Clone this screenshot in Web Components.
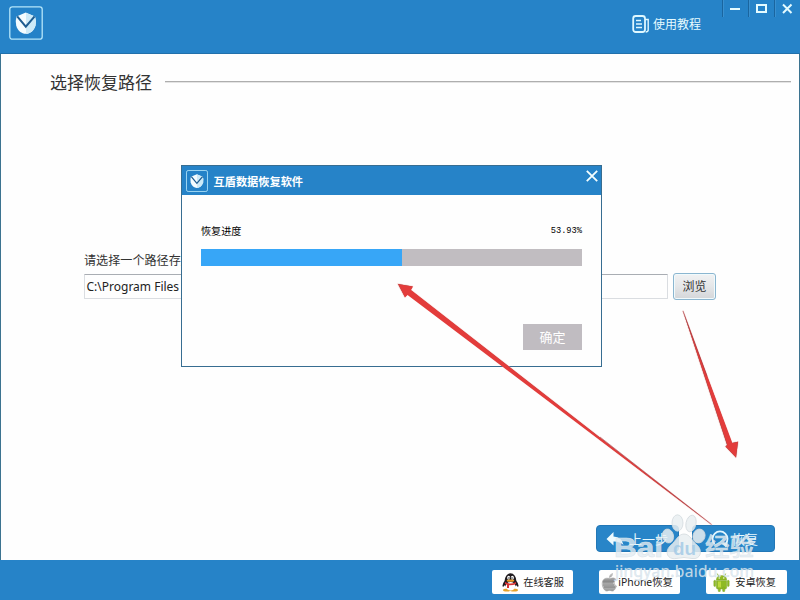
<!DOCTYPE html>
<html lang="zh-CN">
<head>
<meta charset="utf-8">
<title>互盾数据恢复软件</title>
<style>
html,body{margin:0;padding:0}
body{width:800px;height:600px;overflow:hidden;background:#fff;font-family:"Noto Sans","Noto Sans CJK SC",sans-serif}
</style>
</head>
<body>
<recovery-window></recovery-window>
<script>
const define = (name, html) => customElements.define(name, class extends HTMLElement {
  constructor() {
    super();
    const t = document.createElement('template');
    t.innerHTML = html;
    this.attachShadow({ mode: 'open' }).appendChild(t.content.cloneNode(true));
  }
});

define('shield-logo', `
<style>:host{display:block;flex:none;width:34px;height:34px}svg{display:block;width:100%;height:100%}</style>
<svg viewBox="0 0 34 34"><rect x=".8" y=".8" width="32.4" height="32.4" rx="2.5" fill="#2482c8" stroke="#b5e6fa" stroke-width="1.3"/>
<path d="M7.5 10.5L16.8 6.5 26 10.5Q27.5 14 26.5 19.5C25 25 21 27.8 16.8 27.8S8.6 25 7.2 19.5Q6.3 14 7.5 10.5Z" fill="#f4fcff"/>
<path d="M17 7L26 10.5Q27.5 14 26.5 19.5C25 25 21 27.8 17 27.8Z" fill="#cdeaf8"/>
<path d="M8.2 10.3L16.8 20.6 25.6 10.3" fill="none" stroke="#1d5c91" stroke-width="2"/></svg>`);

define('window-controls', `
<style>:host{display:flex;height:17px}span{width:25px;height:17px;border-left:1px solid #1a659f;box-shadow:inset 1px 0 #3990d0}svg{display:block;width:25px;height:17px;fill:none;stroke:#e4fbff;stroke-width:2}</style>
<span><svg viewBox="0 0 25 17"><path d="M7 9h10"/></svg></span>
<span><svg viewBox="0 0 25 17"><path d="M8 5h9v7H8z"/></svg></span>
<span><svg viewBox="0 0 25 17"><path d="M8 4.5l8.5 8.5m0-8.5l-8.5 8.5"/></svg></span>`);

define('app-header', `
<style>
:host{display:flex;box-sizing:border-box;height:54px;background:#2683c8;border-bottom:1px solid #2170ab;padding:6px 0 0 9px}
.help{margin:8px 0 0 auto;display:flex;height:20px;align-items:center;gap:3px;color:#e7fbff;font-size:12px;line-height:20px}
.help svg{width:18px;height:20px;fill:none;stroke:#dff8ff;stroke-width:1.4}
.help span{padding-top:1px}
window-controls{margin:-6px 0 0 21px}
</style>
<shield-logo></shield-logo>
<div class="help"><svg viewBox="0 0 18 20"><rect x="1.2" y="2" width="11.8" height="16" rx="2.5" stroke-width="1.8"/><path d="M13 5.5h3.2v10.7q-.2 1.8-2.5 1.8M4 6.5h5M4 10h6M4 13.5h6"/></svg><span>使用教程</span></div>
<window-controls></window-controls>`);

define('section-title', `
<style>:host{display:flex;align-items:center;height:26px;gap:13px;font-size:17px;line-height:26px;color:#333}
span{padding-top:1px}
i{flex:1;height:1px;background:#aeaeae;border-bottom:1px solid #e4e4e4}</style><span><slot></slot></span><i></i>`);

define('path-picker', `
<style>
:host{display:block;width:632px}
p{margin:0;font-size:12.1px;line-height:18px;color:#333}
div{display:flex;gap:5px;margin-top:3px}
.field{box-sizing:border-box;width:585px;height:25px;margin-top:1px;border:1px solid #dadde1;border-top-color:#a9adb3;border-radius:1px;padding-left:1.5px;font-size:12px;line-height:23px;color:#222}
.browse{box-sizing:border-box;width:43px;height:27px;border:1px solid #8bb6d0;border-radius:3px;background:linear-gradient(#f1f2f3,#e5e7e9 48%,#d4d6d9);box-shadow:inset 0 0 0 1px #f1fafc;text-align:center;font-size:12px;line-height:25px;color:#333}
</style>
<p>请选择一个路径存放</p>
<div><span class="field">C:\\Program Files</span><span class="browse">浏览</span></div>`);

define('progress-dialog', `
<style>
:host{display:block;box-sizing:border-box;width:421px;height:202px;background:#fefefe;border:1px solid #376d91}
header{display:flex;height:29px;background:#2683c8;color:#fff;align-items:center;padding:0 3px 0 4px;font-size:11.2px;font-weight:700}
header shield-logo{width:22px;height:22px;margin-right:5.5px}
header svg{margin:-9px 0 0 auto;width:12px;height:12px;stroke:#f5ffff;stroke-width:1.8}
main{padding:26px 19px 0}
.row{display:flex;justify-content:space-between;font-size:10.1px;line-height:20px;height:20px;color:#000}
.row b{font:400 8.7px/21px "Liberation Mono",monospace}
.bar{height:17px;margin-top:7.5px;background:#c1bdc1}.bar i{display:block;width:201px;height:17px;background:#37a6f7}
.ok{width:59px;height:26px;margin:58.5px 0 0 auto;background:#c0bcc1;color:#fff;text-align:center;font-size:13px;line-height:26px}
</style>
<header><shield-logo></shield-logo><span>互盾数据恢复软件</span><svg viewBox="0 0 12 12"><path d="M.8.8l10.4 10.4m0-10.4L.8 11.2"/></svg></header>
<main><div class="row"><span>恢复进度</span><b>53.93%</b></div><div class="bar"><i></i></div><div class="ok">确定</div></main>`);

define('action-button', `
<style>:host{display:flex;box-sizing:border-box;width:83px;height:27px;border-radius:4px;background:#2885c8;border:1px solid #2277b6;color:#e8faff;align-items:center;justify-content:flex-end;font-size:13px;line-height:24px;padding-right:10px;gap:4px}
::slotted(svg){width:20px;height:20px;flex:none}</style><slot name="icon"></slot><slot></slot>`);

define('link-button', `
<style>:host{display:flex;box-sizing:border-box;width:81px;height:24px;background:#fff;border-radius:2px;align-items:center;justify-content:flex-end;padding-right:9px;gap:4px;font-size:10.2px;line-height:24px;color:#222;white-space:nowrap}
::slotted(svg){width:17px;height:19px;flex:none}</style><slot name="icon"></slot><slot></slot>`);

define('app-footer', `
<style>:host{display:flex;box-sizing:border-box;height:40px;background:#2683c8;padding:10px 13px 0;justify-content:flex-end;gap:26px}
.iphone{padding-right:7px;gap:0;font-size:10.4px}.last{padding-right:11px;gap:5px}</style>
<link-button><svg slot="icon" viewBox="0 0 17 19"><ellipse cx="5" cy="17" rx="4" ry="1.6" fill="#e8a32a"/><ellipse cx="12" cy="17" rx="4" ry="1.6" fill="#e8a32a"/><path d="M2.5 8Q-.5 12 1 14L4 11M14.5 8q3 4 1.5 6l-3-3" fill="#201b1f"/><ellipse cx="8.5" cy="8.5" rx="6" ry="8.3" fill="#201b1f"/><ellipse cx="8.5" cy="13.2" rx="4.8" ry="4.2" fill="#fff"/><ellipse cx="6.6" cy="4.7" rx="1.5" ry="2" fill="#fff"/><ellipse cx="10.4" cy="4.7" rx="1.5" ry="2" fill="#fff"/><circle cx="7" cy="5" r=".7"/><circle cx="10" cy="5" r=".7"/><ellipse cx="8.5" cy="7.7" rx="3.8" ry="1.1" fill="#eb9d27"/><path d="M3 9q5.5 3 11 0v2q-2.5 1.4-7 1.3V15H5v-3.2L3 11z" fill="#d83232"/></svg>在线客服</link-button>
<link-button class="iphone"><svg slot="icon" viewBox="0 0 17 19"><defs><linearGradient id="g" x2="0" y2="1"><stop stop-color="#ddd"/><stop offset=".45" stop-color="#888"/><stop offset=".55" stop-color="#ccc"/><stop offset="1" stop-color="#999"/></linearGradient></defs><path d="M8.5 5.5C10 5.5 12.5 3.7 15 6.5 12.5 8 12.7 11.7 15.5 13 14 16.8 12.5 18.6 10.8 18 8.8 17.2 8 17.2 6.2 18 3.7 18.7 1 14 1.2 10.3 1.5 5.8 4.6 4.5 8.5 5.5ZM8.4 4.5Q8.5 1.4 11.5.5 11.8 3.6 8.4 4.5Z" fill="url(#g)" stroke="#999" stroke-width=".5"/><path d="M2 10h10M2 12h11M3 14h11" stroke="#666" stroke-width=".7"/></svg>iPhone恢复</link-button>
<link-button class="last"><svg slot="icon" viewBox="0 0 17 19"><g fill="#8fba25" stroke="#789f25" stroke-width=".4"><path d="M3.3 7Q3.5 2.5 8.5 2.5T13.7 7z"/><path d="M3.3 7.6h10.4v7Q13.7 16 12.3 16H4.7q-1.4 0-1.4-1.4z"/><rect x=".8" y="7.3" width="1.9" height="6.2" rx=".9"/><rect x="14.3" y="7.3" width="1.9" height="6.2" rx=".9"/><rect x="5.2" y="14" width="2.2" height="4.8" rx="1"/><rect x="9.6" y="14" width="2.2" height="4.8" rx="1"/></g><path d="M5.5 3L4.3.6M11.5 3L12.7.6" stroke="#7ba51c" stroke-width=".8"/><path d="M5 8.5h3v6H5z" fill="#d5e94d" opacity=".65"/><circle cx="6.2" cy="5" r=".7" fill="#fff"/><circle cx="10.8" cy="5" r=".7" fill="#fff"/></svg>安卓恢复</link-button>`);

define('annotation-arrows', `
<style>:host{display:block;width:800px;height:600px;pointer-events:none}svg{display:block}</style>
<svg width="800" height="600" viewBox="0 0 800 600"><g stroke="#f7b2ae" stroke-width="1.6" stroke-linejoin="round" stroke-opacity=".45"><path d="M398 284L412.5 286.5 410.5 290 711.5 524.5 407 293.5 404.8 296.8Z"/><path d="M683 311L731.8 443 738 441.8 736 457.5 725.5 446.5 727 445Z"/></g>
<g fill="#e33c3b"><path d="M398 284L413 286.5 411 290 711.5 524.5 407.6 295 405 297.5Z"/><path d="M683 311L732.3 443 738 441.8 736 457.5 725.5 446.5 727.2 445Z"/></g>
<path d="M600 437L711.5 524.5M683 311l24 65" stroke="#a43b42" stroke-width=".8" opacity=".7"/></svg>`);

define('photo-watermark', `
<style>:host{display:block;width:800px;height:600px;pointer-events:none}svg{display:block}</style>
<svg width="800" height="600" viewBox="0 0 800 600">
<g fill="#e9eef1" fill-opacity=".85" stroke="#d3dade" stroke-width=".8">
<ellipse cx="668" cy="536" rx="5.5" ry="7" transform="rotate(-15 668 536)"/><ellipse cx="677.5" cy="523" rx="5.5" ry="8.2"/><ellipse cx="691" cy="523.5" rx="5" ry="8.4" transform="rotate(12 691 523.5)"/><ellipse cx="699" cy="536" rx="6" ry="7" transform="rotate(18 699 536)"/>
<path d="M684 534C690 534 692 541 697 545C703 550 701 560 692 558.5Q684 556.5 676 558.5C667 560 664 551 671 545C676 541 678 534 684 534Z"/></g>
<g font-family="Liberation Sans,Noto Sans CJK SC,sans-serif" font-weight="700" fill="#e4edf3" fill-opacity=".78" stroke="#dbe4ea" stroke-width=".5">
<text x="614" y="557" font-size="27" textLength="49" lengthAdjust="spacingAndGlyphs">Bai</text>
<text x="673" y="555" font-size="18" textLength="23" lengthAdjust="spacingAndGlyphs" fill="#9fc8e5" stroke="none">du</text>
<text x="705" y="556" font-size="24.5" font-weight="500" textLength="49" lengthAdjust="spacingAndGlyphs">经验</text></g>
<text x="615" y="577" font-family="Noto Sans,sans-serif" font-size="15.5" textLength="139" lengthAdjust="spacing" fill="#e0edf6" fill-opacity=".85" stroke="#b9c6cf" stroke-opacity=".45" stroke-width=".5">jingyan.baidu.com</text></svg>`);

define('recovery-window', `
<style>
:host{display:flex;flex-direction:column;position:relative;width:800px;height:600px;background:#fefefe}
main{flex:1;display:flex;flex-direction:column;box-sizing:border-box;border:solid #3c7390;border-width:0 1px;padding:15px 8px 0 49px;min-height:0}
path-picker{margin:157px 0 0 34px}
.actions{display:flex;gap:13px;margin:225px 16px 0 auto}
.over{position:absolute;left:0;top:0}progress-dialog{position:absolute;left:181px;top:165px}
</style>
<app-header></app-header>
<main><section-title>选择恢复路径</section-title><path-picker></path-picker>
<div class="actions"><action-button><svg slot="icon" viewBox="0 0 20 20"><path d="M1.5 10L8.5 3V7.5Q17 8 18.5 16 15 12.2 8.5 12.4V16.5Z" fill="#edfbff"/></svg>上一步</action-button>
<action-button style="padding-right:16px;gap:2px"><svg slot="icon" viewBox="0 0 20 20"><path d="M4.5 15A7.5 7.5 0 1 1 15.5 15" fill="none" stroke="#e3f7ff" stroke-width="1.8"/><path d="M12 14.5l6-1-2 5z" fill="#e3f7ff"/></svg>恢复</action-button></div></main>
<app-footer></app-footer><progress-dialog></progress-dialog>
<photo-watermark class="over"></photo-watermark><annotation-arrows class="over"></annotation-arrows>`);
</script>
</body>
</html>
